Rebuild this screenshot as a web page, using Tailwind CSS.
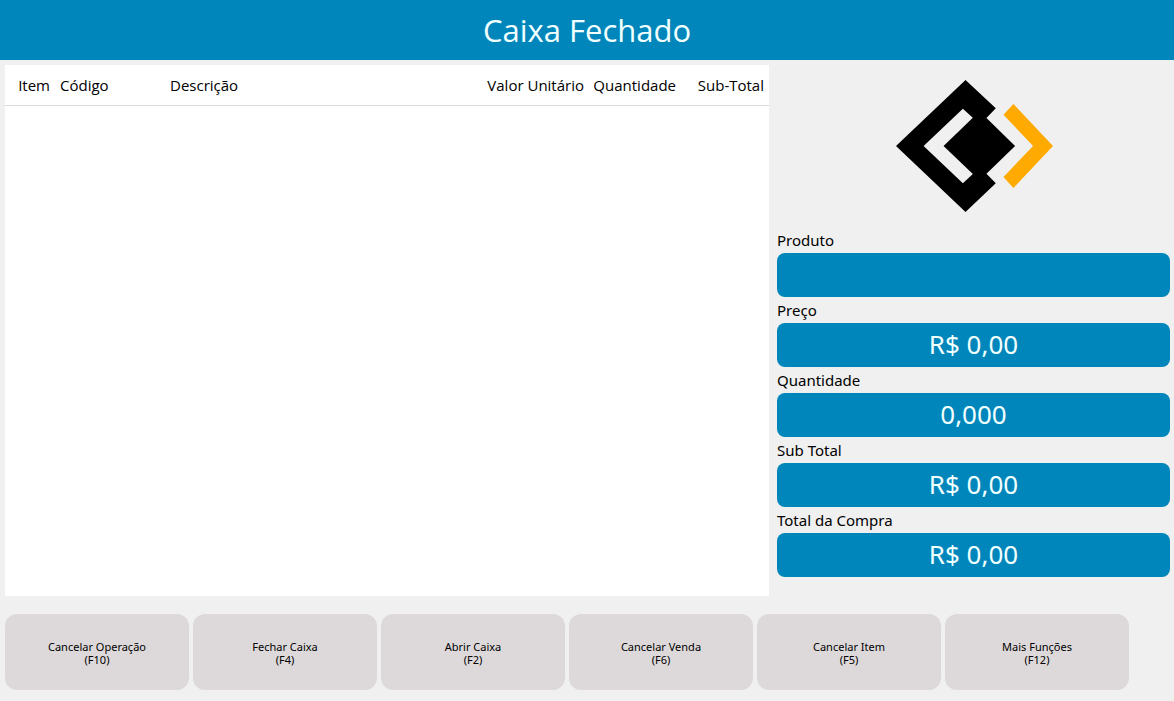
<!DOCTYPE html>
<html lang="pt-BR">
<head>
<meta charset="utf-8">
<meta name="viewport" content="width=device-width, initial-scale=1">
<title>Caixa Fechado</title>
<script src="https://cdn.jsdelivr.net/npm/@tailwindcss/browser@4"></script>
</head>
<body class="flex min-h-screen flex-col bg-[#f0f0f0] font-['Noto_Sans',sans-serif] text-black">
  <header class="flex h-15 items-center justify-center bg-[#0086ba]">
    <h1 class="font-['Open_Sans',sans-serif] text-[31px] leading-10 text-[#f0ffff]">Caixa Fechado</h1>
  </header>

  <main class="grid flex-1 grid-cols-[764fr_393fr] gap-2 pt-[5px] pr-1 pl-[5px]">
    <section class="bg-white">
      <table class="w-full table-fixed font-['Open_Sans',sans-serif] text-[15px]">
        <thead>
          <tr class="h-10 border-b border-[#d9d9d9] whitespace-nowrap">
            <th class="w-[50px] px-[5px] text-right font-normal">Item</th>
            <th class="w-[110px] px-[5px] text-left font-normal">Código</th>
            <th class="px-[5px] text-left font-normal">Descrição</th>
            <th class="w-[110px] px-[5px] text-right font-normal">Valor Unitário</th>
            <th class="w-[90px] px-[3px] text-right font-normal">Quantidade</th>
            <th class="w-[90px] px-[5px] text-right font-normal">Sub-Total</th>
          </tr>
        </thead>
        <tbody></tbody>
      </table>
    </section>

    <section class="flex flex-col">
      <div class="flex h-[162px] items-center justify-center pl-[2px]">
        <svg class="h-[132px] w-[157px]" viewBox="48 30 472 396" preserveAspectRatio="none" role="img" aria-label="Logo">
          <path fill="#000" fill-rule="evenodd" d="M257 30 348 115 320 144 406 228 320 311 348 340 257 426 48 228ZM249 116 131 228 249 340 279 312 191 228 279 143Z"/>
          <path fill="#ffaa00" d="M401 102 520 228 401 354 371 321 460 228 371 134Z"/>
        </svg>
      </div>
      <label for="produto" class="h-[26px] text-[15px] leading-[26px]">Produto</label>
      <input id="produto" readonly value="" class="h-11 w-full rounded-lg bg-[#0086ba] pb-[2px] text-center text-[26px] text-[#f0ffff] outline-none">
      <label for="preco" class="h-[26px] text-[15px] leading-[26px]">Preço</label>
      <input id="preco" readonly value="R$ 0,00" class="h-11 w-full rounded-lg bg-[#0086ba] pb-[2px] text-center text-[26px] text-[#f0ffff] outline-none">
      <label for="quantidade" class="h-[26px] text-[15px] leading-[26px]">Quantidade</label>
      <input id="quantidade" readonly value="0,000" class="h-11 w-full rounded-lg bg-[#0086ba] pb-[2px] text-center text-[26px] text-[#f0ffff] outline-none">
      <label for="subtotal" class="h-[26px] text-[15px] leading-[26px]">Sub Total</label>
      <input id="subtotal" readonly value="R$ 0,00" class="h-11 w-full rounded-lg bg-[#0086ba] pb-[2px] text-center text-[26px] text-[#f0ffff] outline-none">
      <label for="total" class="h-[26px] text-[15px] leading-[26px]">Total da Compra</label>
      <input id="total" readonly value="R$ 0,00" class="h-11 w-full rounded-lg bg-[#0086ba] pb-[2px] text-center text-[26px] text-[#f0ffff] outline-none">
    </section>
  </main>

  <footer class="grid grid-cols-6 gap-1 pt-[18px] pr-[45px] pb-[11px] pl-[5px] text-[11px] leading-[13px]">
    <button class="h-19 rounded-xl bg-[#ddd9da] pt-[2px]">Cancelar Operação<br>(F10)</button>
    <button class="h-19 rounded-xl bg-[#ddd9da] pt-[2px]">Fechar Caixa<br>(F4)</button>
    <button class="h-19 rounded-xl bg-[#ddd9da] pt-[2px]">Abrir Caixa<br>(F2)</button>
    <button class="h-19 rounded-xl bg-[#ddd9da] pt-[2px]">Cancelar Venda<br>(F6)</button>
    <button class="h-19 rounded-xl bg-[#ddd9da] pt-[2px]">Cancelar Item<br>(F5)</button>
    <button class="h-19 rounded-xl bg-[#ddd9da] pt-[2px]">Mais Funções<br>(F12)</button>
  </footer>
</body>
</html>
